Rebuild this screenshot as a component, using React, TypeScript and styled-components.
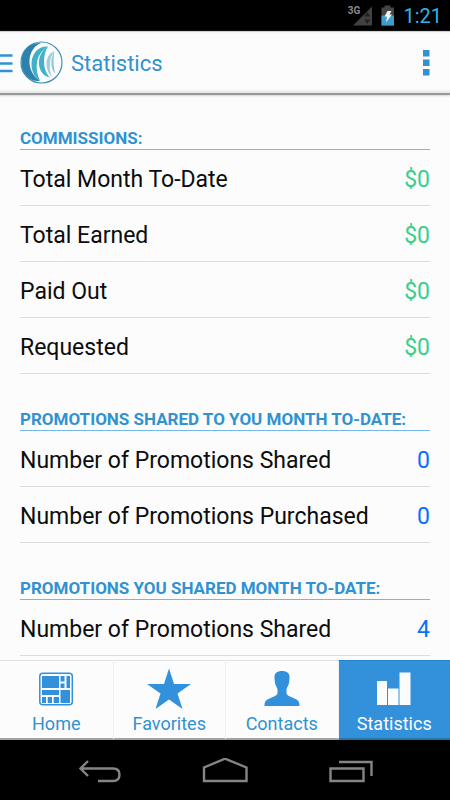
import React from "react";
import styled, { createGlobalStyle } from "styled-components";

const BLUE = "#3092d0";

const GlobalStyle = createGlobalStyle`
  * { box-sizing: border-box; }
  body { margin: 0; background: #fcfcfc; font-family: Roboto, "Noto Sans", sans-serif; }
  button { font: inherit; border: 0; padding: 0; background: none; cursor: pointer; }
`;

const Screen = styled.div`
  display: flex;
  flex-direction: column;
  height: 100vh;
  overflow: hidden;
  background: #fcfcfc;
`;

const StatusBar = styled.div`
  flex: none;
  display: flex;
  justify-content: flex-end;
  align-items: center;
  height: 31px;
  padding-right: 8px;
  background: #000;
`;

const Clock = styled.time`
  margin-left: 8px;
  color: #33b5e5;
  font-size: 20px;
  line-height: 32px;
`;

const Network = styled.span`
  align-self: flex-start;
  margin-top: 4px;
  margin-right: -9px;
  z-index: 1;
  color: #8a8a8a;
  font-size: 10px;
  font-weight: 700;
  line-height: 13px;
`;

const StatusIcons = styled.svg`
  flex: none;
  display: block;
`;

const Header = styled.header`
  flex: none;
  display: flex;
  align-items: center;
  height: 64px;
  padding-right: 14px;
  border-top: 1px solid #cfcfcf;
  border-bottom: 2px solid #969a98;
  background: linear-gradient(#f6f4f5, #fcfcfc 3px, #fcfcfc 57px, #e4e4e4);
  box-shadow: 0 1px 2px #d8d4d6;
`;

const MenuButton = styled.button`
  display: flex;
  align-items: center;
  color: ${BLUE};
`;

const Title = styled.h1`
  flex: 1;
  margin: 0;
  padding: 2px 0 0 8px;
  color: ${BLUE};
  font-size: 22px;
  font-weight: 400;
  line-height: 28px;
`;

const OverflowButton = styled.button`
  display: flex;
  justify-content: center;
  width: 20px;
  color: ${BLUE};
`;

const Content = styled.main`
  flex: 1;
  min-height: 0;
  overflow-y: auto;
  scrollbar-width: none;
  padding: 0 20px;
`;

const Section = styled.section`
  & + & { padding-top: 2px; }
`;

const SectionTitle = styled.h2`
  display: flex;
  align-items: flex-end;
  height: 55px;
  margin: 0;
  padding-bottom: 1px;
  border-bottom: 1px solid #74b9e6;
  color: ${BLUE};
  font-size: 17px;
  font-weight: 700;
  line-height: 20px;
  white-space: nowrap;
`;

const Rows = styled.dl`
  margin: 0;
`;

const Row = styled.div`
  display: flex;
  justify-content: space-between;
  align-items: center;
  height: 56px;
  padding-top: 4px;
  border-bottom: 1px solid #dcdcdc;
  font-size: 23px;
  line-height: 28px;
`;

const Label = styled.dt`
  color: #0c0c0c;
`;

const Value = styled.dd<{ $money: boolean }>`
  margin: 0;
  color: ${(p) => (p.$money ? "#38d08c" : "#0a70f5")};
`;

const Tabs = styled.nav`
  flex: none;
  display: grid;
  grid-template-columns: repeat(4, 1fr);
  height: 80px;
`;

const Tab = styled.button<{ $active: boolean }>`
  display: flex;
  flex-direction: column;
  align-items: center;
  padding-top: 7px;
  border-top: 1px solid ${(p) => (p.$active ? "#1b86c8" : "#e2e2e2")};
  border-bottom: 2px solid ${(p) => (p.$active ? "#2873a8" : "#a2a4a3")};
  background: ${(p) => (p.$active ? "#3391dc" : "#fcfcfc")};
  color: ${(p) => (p.$active ? "#fcfcfc" : BLUE)};

  & + & { border-left: 1px solid #f2f2f2; }
  & + &[aria-current="page"] { border-left-color: #3391dc; }

  svg { fill: ${(p) => (p.$active ? "#fcfcfc" : "#3391dc")}; }
`;

const TabLabel = styled.span`
  margin-top: 2px;
  font-size: 18px;
  line-height: 24px;
`;

const SystemBar = styled.div`
  flex: none;
  display: grid;
  grid-template-columns: 1fr 50px 1fr;
  column-gap: 50px;
  align-items: center;
  height: 60px;
  padding: 2px 75px 0 74px;
  background: #000;
`;

const SystemButton = styled.button<{ $side?: "start" | "end" }>`
  display: flex;
  justify-self: ${(p) => p.$side ?? "center"};

  svg { fill: none; stroke: #858585; stroke-width: 2.4; }
`;

function StatusGlyphs() {
  return (
    <StatusIcons width="44" height="24" viewBox="0 0 44 24" aria-hidden="true">
      <path d="M21 2.500V21.500H2Z" fill="#414141" />
      <path d="M16.300 8l3 4.500h-6zM16.300 20l3-4.500h-6z" fill="#202020" />
      <path d="M33.500 1.500h6v2h3.500v18H30.500v-18h3z" fill="#454545" />
      <path d="M30.500 11.500H43v10H30.500z" fill="#3d9dcb" />
      <path d="M36.500 7h4l-2 3.500h2.500l-6 8 1-6h-2.500z" fill="#f2f2f2" />
    </StatusIcons>
  );
}

function Brand() {
  return (
    <svg width="63" height="46" viewBox="0 40 63 46" aria-hidden="true">
      <path d="M0 55.500h12.500M0 63.500h12.500M0 71h12.500" stroke="currentColor" strokeWidth="2.500" />
      <circle cx="41.500" cy="62.500" r="20.500" fill="#fafcfd" stroke="#418fb2" strokeWidth="1.200" />
      <path d="M41 43C29 42 21.500 51 21.500 62.500C21.500 74 30 82 40 81C33 76 29 69 29.500 60C30 52 34 46 41 43Z" fill="#2c82aa" />
      <path d="M48 46.500C38 46 31.500 54 31.500 64C31.500 72 35 78 40 80.500C37 75 36 69 37 62C38.500 55 42 50 48 46.500Z" fill="#40afc7" />
      <path d="M48 46.500C42 50 38.500 57 39 64C39.500 71 43.500 76 49.500 77.500C46 73 44 68 44 62C44 56 45 51 48 46.500Z" fill="#43b0c8" />
      <path d="M54.500 51C49 53 46 59 46.500 65C47 70 48.500 74 51.500 76.500C50 72 49.500 67 50 62C50.500 58 52 54 54.500 51Z" fill="#a1cddd" />
      <path d="M54.500 51C52 55 51 60 51.500 65C52 69 53 72 55.500 73.500C54 70 53.500 66 53.500 61C53.500 57 54 54 54.500 51Z" fill="#8fc3d8" />
    </svg>
  );
}

function HomeIcon() {
  return (
    <svg width="44" height="42" viewBox="0 0 44 42" aria-hidden="true">
      <rect x="5.800" y="5.300" width="32.500" height="31.500" rx="3" fill="none" stroke="#3391dc" strokeWidth="1.500" />
      <path d="M8 8h17v12H8zM26.500 8h4v5.500h-4zM32.500 8H36v12h-3.500zM26.500 15.500h4V20h-4zM8 22h17v5H8zM26.500 22H36v13h-9.500zM8 29h4v6H8zM13.700 29h4.300v6h-4.300zM19.700 29H25v6h-5.300z" />
    </svg>
  );
}

function StarIcon() {
  return (
    <svg width="44" height="42" viewBox="0 0 44 42" aria-hidden="true">
      <path d="M22 .5L27 16H44L30.500 25.500L35.500 41L22 31.500L8.500 41L13.500 25.500L0 16H17Z" />
    </svg>
  );
}

function ContactIcon() {
  return (
    <svg width="44" height="42" viewBox="0 0 44 42" aria-hidden="true">
      <path d="M22 3C17 3 14 5.500 14.500 10L15 15C15.500 18 17.500 19.500 17.500 22V25C17.500 28 13 28.500 8.500 31C5.500 32.500 4.500 34 4.500 38H39.500C39.500 34 38.500 32.500 35.500 31C31 28.500 26.500 28 26.500 25V22C26.500 19.500 28.500 18 29 15L29.500 10C30 5.500 27 3 22 3Z" />
    </svg>
  );
}

function ChartIcon() {
  return (
    <svg width="44" height="42" viewBox="0 0 44 42" aria-hidden="true">
      <path d="M5 13h10v24H5zM16 20.500h10.500V37H16zM27.500 4.500h11V37h-11z" />
    </svg>
  );
}

const sections = [
  {
    title: "COMMISSIONS:",
    rows: [
      ["Total Month To-Date", "$0"],
      ["Total Earned", "$0"],
      ["Paid Out", "$0"],
      ["Requested", "$0"],
    ],
  },
  {
    title: "PROMOTIONS SHARED TO YOU MONTH TO-DATE:",
    rows: [
      ["Number of Promotions Shared", "0"],
      ["Number of Promotions Purchased", "0"],
    ],
  },
  {
    title: "PROMOTIONS YOU SHARED MONTH TO-DATE:",
    rows: [["Number of Promotions Shared", "4"]],
  },
];

const tabs = [
  { label: "Home", Icon: HomeIcon },
  { label: "Favorites", Icon: StarIcon },
  { label: "Contacts", Icon: ContactIcon },
  { label: "Statistics", Icon: ChartIcon },
];

export default function App() {
  const active = "Statistics";
  return (
    <>
      <GlobalStyle />
      <Screen>
        <StatusBar>
          <Network>3G</Network>
          <StatusGlyphs />
          <Clock>1:21</Clock>
        </StatusBar>
        <Header>
          <MenuButton aria-label="Open menu">
            <Brand />
          </MenuButton>
          <Title>Statistics</Title>
          <OverflowButton aria-label="More options">
            <svg width="8" height="26" viewBox="0 0 8 26" fill="currentColor" aria-hidden="true">
              <path d="M1 0h6.500v6.500H1zM1 9.500h6.500V16H1zM1 19h6.500v6.500H1z" />
            </svg>
          </OverflowButton>
        </Header>
        <Content>
          {sections.map((section) => (
            <Section key={section.title}>
              <SectionTitle>{section.title}</SectionTitle>
              <Rows>
                {section.rows.map(([label, value]) => (
                  <Row key={label}>
                    <Label>{label}</Label>
                    <Value $money={value.startsWith("$")}>{value}</Value>
                  </Row>
                ))}
              </Rows>
            </Section>
          ))}
        </Content>
        <Tabs aria-label="Main">
          {tabs.map(({ label, Icon }) => (
            <Tab key={label} $active={label === active} aria-current={label === active ? "page" : undefined}>
              <Icon />
              <TabLabel>{label}</TabLabel>
            </Tab>
          ))}
        </Tabs>
        <SystemBar>
          <SystemButton aria-label="Back" $side="start">
            <svg width="50" height="26" viewBox="0 0 50 26" aria-hidden="true">
              <path d="M14 3L6.500 10.500L14 18M7 10.500H39C43.500 10.500 45.500 13 45.500 16.500C45.500 20.500 43.500 23 39 23H24" />
            </svg>
          </SystemButton>
          <SystemButton aria-label="Home screen">
            <svg width="50" height="26" viewBox="0 0 50 26" aria-hidden="true">
              <path d="M4 23V9.500L25 .7L46.500 9.500V23Z" />
            </svg>
          </SystemButton>
          <SystemButton aria-label="Recent apps" $side="end">
            <svg width="50" height="26" viewBox="0 0 50 26" aria-hidden="true">
              <path d="M5.500 10.500H38.500V23H5.500ZM14 4H46.500V18" />
            </svg>
          </SystemButton>
        </SystemBar>
      </Screen>
    </>
  );
}
